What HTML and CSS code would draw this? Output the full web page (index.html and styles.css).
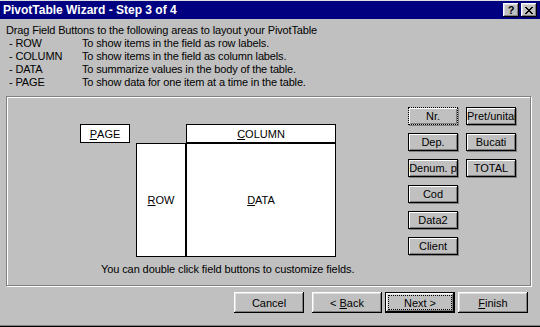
FILE: index.html
```html
<!DOCTYPE html>
<html lang="en">
<head>
    <meta charset="UTF-8">
    <title>PivotTable Wizard - Step 3 of 4</title>
    <link rel="stylesheet" href="styles.css">
</head>
<body>

    <div class="window">
        <div class="titlebar">
            <span class="title">PivotTable Wizard - Step 3 of 4</span>
            <div class="caption-btns">
                <span class="cap-btn help">?</span>
                <span class="cap-btn close">
                    <svg width="8" height="7" viewBox="0 0 8 7" shape-rendering="crispEdges">
                        <path d="M0 0h2v1h-2zM6 0h2v1h-2zM1 1h2v1h-2zM5 1h2v1h-2zM2 2h4v1h-4zM3 3h2v1h-2zM2 4h4v1h-4zM1 5h2v1h-2zM5 5h2v1h-2zM0 6h2v1h-2zM6 6h2v1h-2z" fill="#000"/>
                    </svg>
                </span>
            </div>
        </div>

        <div class="intro">
            <p>Drag Field Buttons to the following areas to layout your PivotTable</p>
            <ul>
                <li><span class="key">- ROW</span>To show items in the field as row labels.</li>
                <li><span class="key">- COLUMN</span>To show items in the field as column labels.</li>
                <li><span class="key">- DATA</span>To summarize values in the body of the table.</li>
                <li><span class="key">- PAGE</span>To show data for one item at a time in the table.</li>
            </ul>
        </div>

        <div class="frame">
            <div class="layout-side">
                <div class="pivot">
                    <div class="box page"><u>P</u>AGE</div>
                    <div class="box column"><u>C</u>OLUMN</div>
                    <div class="box row"><u>R</u>OW</div>
                    <div class="box data"><u>D</u>ATA</div>
                </div>
                <div class="hint">You can double click field buttons to customize fields.</div>
            </div>
            <div class="fields">
                <div class="field focus">Nr.</div>
                <div class="field">Dep.</div>
                <div class="field">Denum. p</div>
                <div class="field">Cod</div>
                <div class="field">Data2</div>
                <div class="field">Client</div>
                <div class="field">Pret/unitar</div>
                <div class="field">Bucati</div>
                <div class="field">TOTAL</div>
            </div>
        </div>

        <div class="actions">
            <button class="btn cancel">Cancel</button>
            <button class="btn">&lt; <u>B</u>ack</button>
            <button class="btn default"><span class="focus-rect">Next &gt;</span></button>
            <button class="btn"><u>F</u>inish</button>
        </div>
    </div>

</body>
</html>
```

FILE: styles.css
```css
body {
    margin: 0;
    background: #c0c0c0;
    font-family: "Liberation Sans", Arial, sans-serif;
    font-size: 11px;
    color: #000;
}
.window {
    width: 540px;
    height: 327px;
    box-sizing: border-box;
    border-top: 1px solid #dfdfdf;
    border-bottom: 1px solid #000;
    box-shadow: inset 0 -1px #808080;
    overflow: hidden;
}
.titlebar {
    height: 18px;
    background: #000080;
    display: flex;
    align-items: center;
    justify-content: space-between;
    padding: 0 3px 0 3px;
}
.title {
    color: #fff;
    font-weight: bold;
    font-size: 12px;
}
.caption-btns {
    display: flex;
    gap: 2px;
}
.cap-btn {
    width: 16px;
    height: 14px;
    box-sizing: border-box;
    background: #c0c0c0;
    box-shadow: inset -1px -1px #000, inset 1px 1px #fff, inset -2px -2px #808080, inset 2px 2px #dfdfdf;
    display: flex;
    align-items: center;
    justify-content: center;
    font-weight: bold;
    font-size: 11px;
    line-height: 1;
}
.cap-btn svg {
    display: block;
}
.intro {
    padding: 5px 6px 0 6px;
    height: 72px;
    letter-spacing: -0.15px;
}
.intro p,
.intro ul {
    margin: 0;
    padding: 0;
    list-style: none;
    line-height: 13px;
}
.intro li {
    display: flex;
    padding-left: 3px;
}
.key {
    width: 73px;
}
.frame {
    margin-left: 6px;
    width: 525px;
    height: 190px;
    box-sizing: border-box;
    border: 1px solid #808080;
    box-shadow: inset 1px 1px #fff, 1px 1px #fff;
    display: flex;
}
.layout-side {
    width: 401px;
    padding: 27px 0 0 73px;
    box-sizing: border-box;
}
.pivot {
    display: grid;
    grid-template-columns: 50px 6px 50px 150px;
    grid-template-rows: 19px 114px;
}
.box {
    background: #fff;
    border: 1px solid #000;
    box-sizing: border-box;
    display: flex;
    align-items: center;
    justify-content: center;
}
.page { grid-column: 1; grid-row: 1; }
.column { grid-column: 4; grid-row: 1; }
.row { grid-column: 3; grid-row: 2; }
.data { grid-column: 4; grid-row: 2; }
.hint {
    margin: 6px 0 0 21px;
    white-space: nowrap;
    letter-spacing: -0.1px;
}
.fields {
    margin-top: 10px;
    display: grid;
    grid-template-columns: 50px 50px;
    grid-template-rows: repeat(6, 18px);
    grid-auto-flow: column;
    column-gap: 8px;
    row-gap: 8px;
    align-content: start;
}
.field {
    border: 1px solid #000;
    box-sizing: border-box;
    box-shadow: inset 1px 1px #fff, inset -1px -1px #808080, 1px 1px #808080;
    text-align: center;
    line-height: 16px;
    white-space: nowrap;
    overflow: hidden;
}
.field.focus {
    border: 1px dotted #000;
}
.actions {
    display: flex;
    justify-content: flex-end;
    gap: 3px;
    padding: 6px 12px 0 0;
}
.btn {
    width: 70px;
    height: 21px;
    padding: 0;
    border: none;
    background: #c0c0c0;
    font-family: "Liberation Sans", Arial, sans-serif;
    font-size: 11px;
    color: #000;
    box-shadow: inset -1px -1px #000, inset 1px 1px #fff, inset -2px -2px #808080, inset 2px 2px #dfdfdf;
}
.btn.cancel {
    margin-right: 5px;
}
.btn.default {
    border: 1px solid #000;
    display: flex;
    align-items: center;
    justify-content: center;
    padding: 3px;
    box-sizing: border-box;
}
.focus-rect {
    display: flex;
    align-items: center;
    justify-content: center;
    width: 100%;
    height: 100%;
    outline: 1px dotted #000;
}
```
